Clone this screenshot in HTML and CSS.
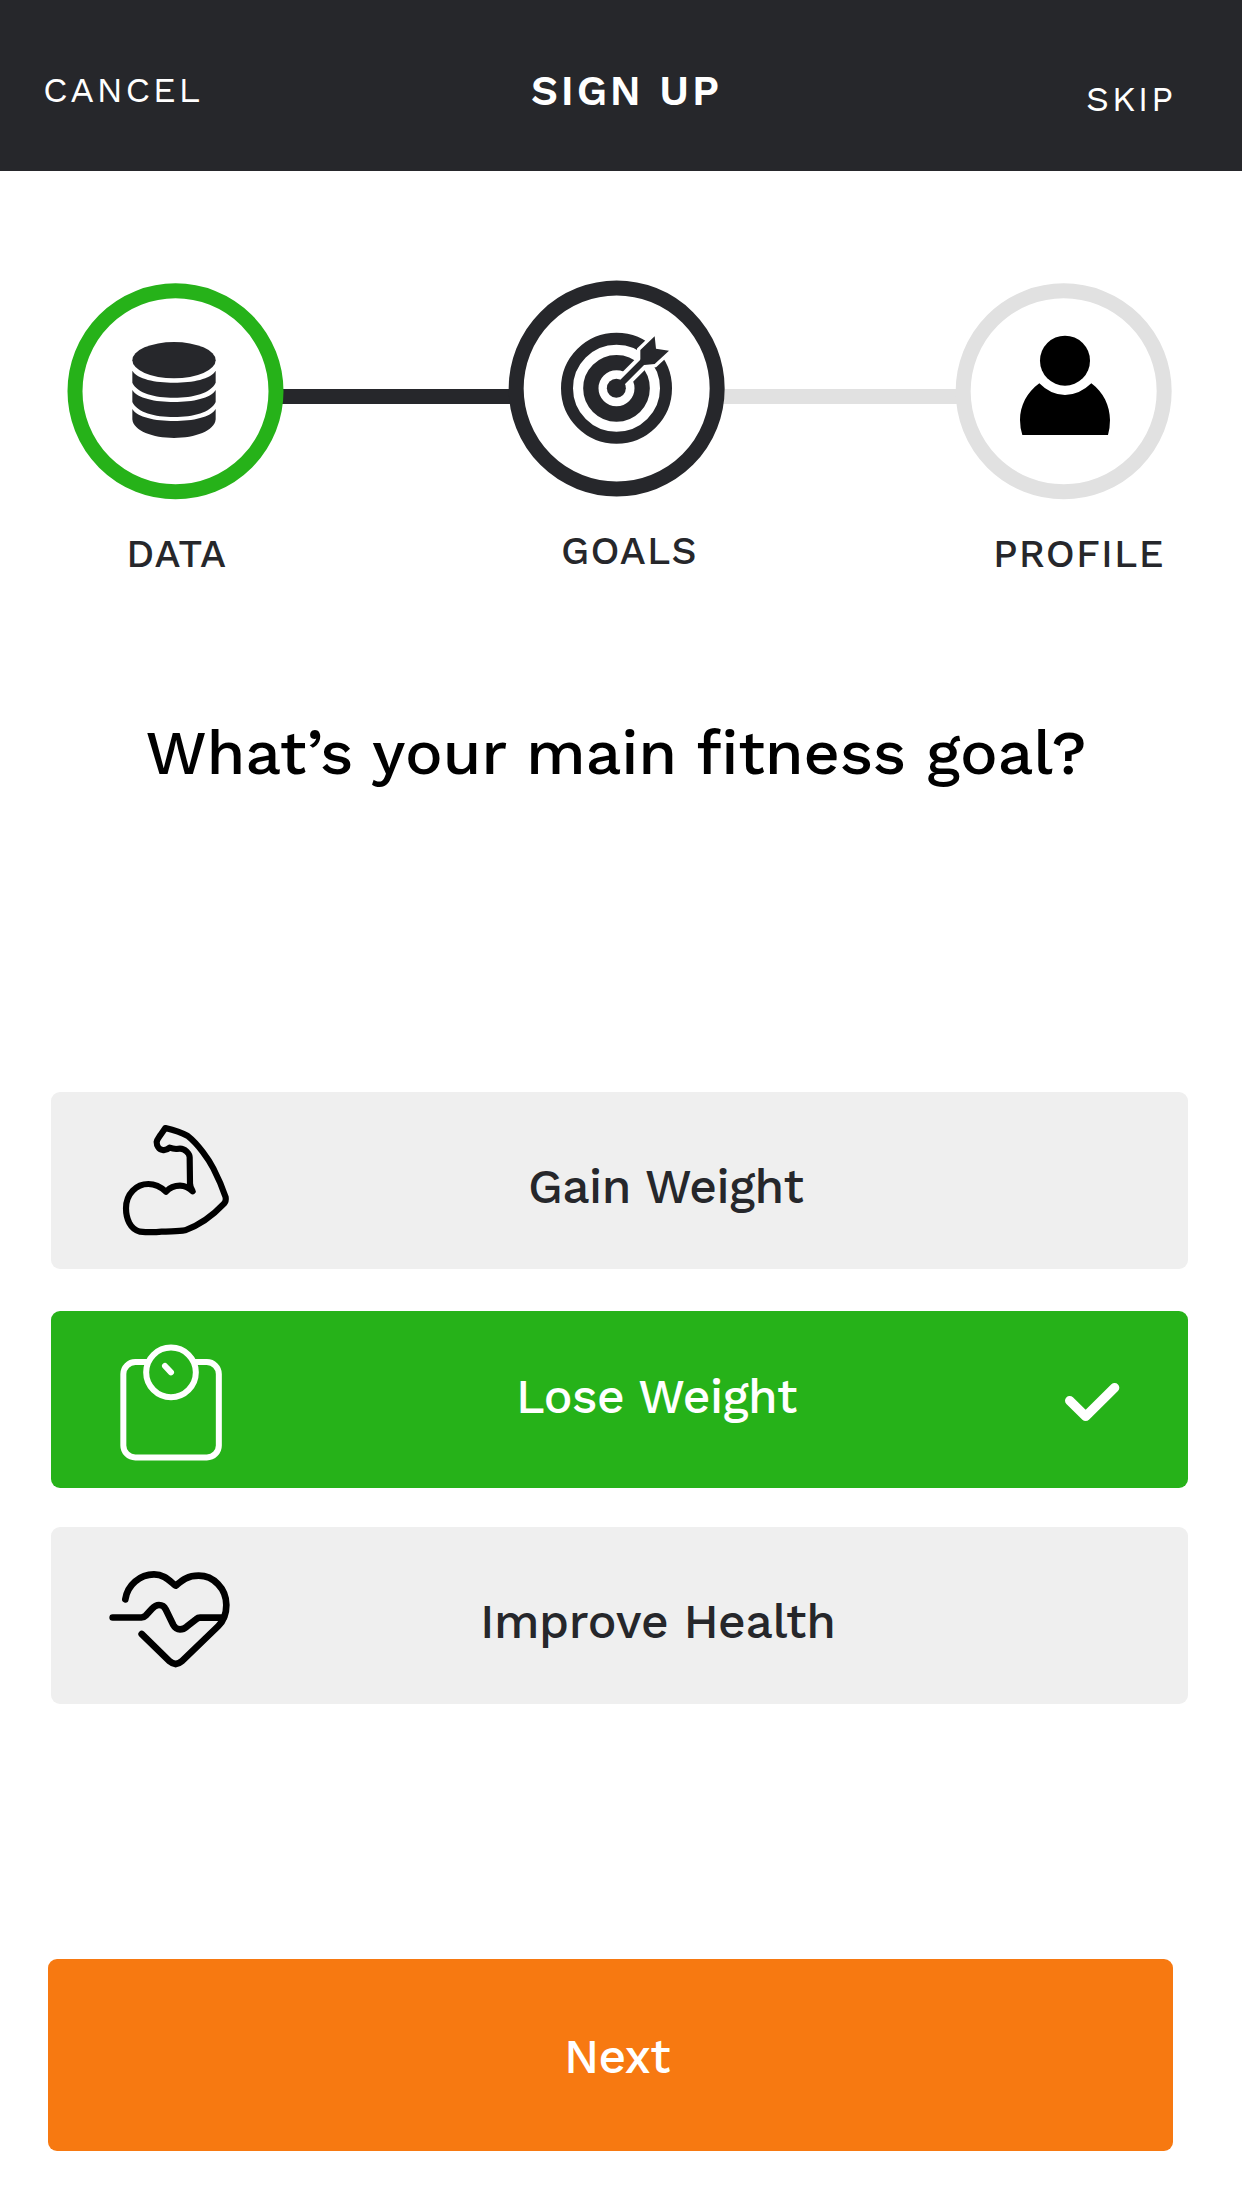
FILE: index.html
```html
<!DOCTYPE html>
<html lang="en">
<head>
<meta charset="utf-8">
<title>Sign Up</title>
<link rel="stylesheet" href="styles.css">
</head>
<body>
<header class="topbar">
  <span class="cancel">CANCEL</span>
  <h1 class="title">SIGN UP</h1>
  <span class="skip">SKIP</span>
</header>
<main>
  <section class="steps">
    <div class="step done">
      <svg class="ring" viewBox="51 69 651 651" fill="#26272b">
        <circle cx="376.500" cy="394" r="301.500" fill="#fff" stroke="#26b219" stroke-width="45"/>
        <ellipse cx="372" cy="300.500" rx="125" ry="54.500"/>
        <path d="M247 332C262 357 315 368 372 368S482 357 497 332V368C482 400 430 413 372 413S262 400 247 368Z"/>
        <path d="M247 390C262 415 315 426 372 426S482 415 497 390V426C482 458 430 471 372 471S262 458 247 426Z"/>
        <path d="M247 447C262 472 315 483 372 483S482 472 497 447V478C494 513 435 534 372 534S250 513 247 478Z"/>
      </svg>
      <span class="label">DATA</span>
    </div>
    <div class="link active"></div>
    <div class="step current">
      <svg class="ring" viewBox="54 60 651 651">
        <circle cx="380" cy="385.500" r="301.500" fill="#fff" stroke="#26272b" stroke-width="45"/>
        <g fill="none" stroke="#26272b">
          <circle cx="379.500" cy="385" r="148.500" stroke-width="36"/>
          <circle cx="379.500" cy="385" r="77" stroke-width="46"/>
        </g>
        <path d="M390 374L480 284" stroke="#fff" stroke-width="43"/>
        <path d="M451 270L494 229L498 266L537 272L494 312L463 315L451 300Z" fill="#fff" stroke="#fff" stroke-width="20"/>
        <path d="M379 385L475 289" stroke="#26272b" stroke-width="19"/>
        <path d="M451 270L494 229L498 266L537 272L494 312L463 315L451 300Z" fill="#26272b"/>
        <circle cx="379" cy="385" r="28.500" fill="#26272b"/>
      </svg>
      <span class="label">GOALS</span>
    </div>
    <div class="link upcoming"></div>
    <div class="step profile">
      <svg class="ring" viewBox="45 69 651 651">
        <circle cx="371" cy="394" r="301.500" fill="#fff" stroke="#e1e1e1" stroke-width="45"/>
        <circle cx="375" cy="302" r="75"/>
        <path d="M298 370Q332 405 375 405T454 370C490 396 510 438 510 480Q510 503 504 525H247Q240 503 240 480C240 438 261 396 298 370Z"/>
      </svg>
      <span class="label">PROFILE</span>
    </div>
  </section>
  <h2 class="question">What’s your main fitness goal?</h2>
  <section class="options">
    <div class="option gain">
      <svg class="icon" viewBox="201 36 399 531" fill="none" stroke="#000" stroke-width="18.500" stroke-linejoin="round" stroke-linecap="round">
        <path d="M376 144C400 150 425 158 442 167C475 193 506 238 520 265C534 292 548 325 557 352Q559 363 552 371C520 405 480 435 435 451C415 455 390 453 365 455C345 457 320 457 300 455C270 448 258 415 258 385C258 340 290 312 325 312C348 312 366 324 378 335C390 322 405 317 420 317C437 317 449 325 458 334C452 325 450 318 450 310L449 232C449 220 434 206 420 206Q414 206 409 207Q398 206 389 203C381 210 373 211 368 210C356 208 350 196 350 186C351 178 357 172 362 164Z"/>
      </svg>
      <span class="name">Gain Weight</span>
    </div>
    <div class="option lose">
      <svg class="icon" viewBox="201 33 399 531" fill="none" stroke="#fff" stroke-width="18" stroke-linecap="round">
        <rect x="250" y="186" width="286.500" height="286.500" rx="36"/>
        <circle cx="393" cy="217" r="74.500" fill="#26b219"/>
        <path d="M375 198L393 217"/>
      </svg>
      <span class="name">Lose Weight</span>
      <svg class="check" viewBox="180 33 210 531" fill="none" stroke="#fff" stroke-width="28" stroke-linecap="round" stroke-linejoin="round">
        <path d="M209 302L257 349L344 263"/>
      </svg>
    </div>
    <div class="option improve">
      <svg class="icon" viewBox="201 21 399 531" fill="none" stroke="#000" stroke-width="20" stroke-linecap="round" stroke-linejoin="round">
        <path d="M256 238C262 195 300 163 342 163C372 163 388 182 407 197C425 182 440 167 476 167C520 167 559 205 559 255C559 285 548 305 535 318L425 424Q407 440 389 424L305 342"/>
        <path d="M218 292.500H304Q312 292 318 286L336 266Q346 255 357 255Q371 255 377 268L400 315Q407 328 420 328Q431 328 440 320L468 298Q474 293 480 293H550"/>
      </svg>
      <span class="name">Improve Health</span>
    </div>
  </section>
  <button class="next">Next</button>
</main>
</body>
</html>
```
FILE: styles.css
```css
* { box-sizing: border-box; }

body {
  margin: 0;
  background: #fff;
  color: #26272b;
  font-family: "Work Sans", Inter, sans-serif;
  font-weight: 500;
}

svg { display: block; flex: none; }

.topbar {
  display: grid;
  grid-template-columns: 531px 555px auto;
  align-items: start;
  height: 171px;
  padding-top: 70px;
  background: #26272b;
  color: #fff;
  font-size: 36px;
  font-weight: 400;
  line-height: 40px;
  letter-spacing: 2.57px;
}
.cancel { padding-left: 43px; }
.title {
  margin: 1px 0 0;
  font-size: 42px;
  font-weight: 600;
  line-height: 40px;
  letter-spacing: 2.8px;
}
.skip { margin-top: 9px; }

.steps { display: flex; height: 440px; padding: 112px 0 0 67px; }
.step { width: 217px; flex: none; white-space: nowrap; }
.current { margin-top: -3px; }
.ring { width: 217px; height: 217px; }
.label {
  display: block;
  margin-top: 34px;
  font-size: 39px;
  line-height: 40px;
  letter-spacing: 1.2px;
}
.done .label { padding-left: 59.3px; letter-spacing: 1.1px; }
.current .label { padding-left: 53px; }
.profile .label { padding-left: 38px; }

/* Connectors tuck slightly under the rings so the curved edges stay joined. */
.link {
  position: relative;
  z-index: -1;
  height: 15px;
  margin: 106px -4px 0;
  flex: none;
}
.active { width: 232px; background: #26272b; }
.upcoming { width: 238px; background: #e1e1e1; }

.question {
  margin: 101px 0 0 145.5px;
  color: #000;
  font-size: 63px;
  font-weight: 500;
  line-height: 80px;
  letter-spacing: -0.23px;
  white-space: nowrap;
}

.options { margin: 300px 0 0 51px; width: 1137px; }
.option {
  display: flex;
  height: 177px;
  padding-left: 56px;
  background: #efefef;
  border-radius: 9px;
  font-size: 48px;
  line-height: 60px;
  letter-spacing: -0.45px;
  white-space: nowrap;
}
.icon { width: 133px; height: 177px; }
.name { padding-top: 65px; }
.gain .name { padding-left: 288px; letter-spacing: -0.5px; }
.lose { margin: 42px 0 39px; background: #26b219; color: #fff; }
.lose .name { padding: 56px 0 0 276px; }
.improve .name { padding-left: 240px; letter-spacing: -0.4px; }
.check { width: 70px; height: 177px; margin: 0 58px 0 auto; }

.next {
  display: block;
  width: 1125px;
  height: 192px;
  margin: 255px 0 0 48px;
  padding: 3px 0 0 516px;
  border: 0;
  border-radius: 9px;
  background: #f77911;
  color: #fff;
  font: 500 48px/60px "Work Sans", Inter, sans-serif;
  letter-spacing: -0.6px;
  text-align: left;
}
```
